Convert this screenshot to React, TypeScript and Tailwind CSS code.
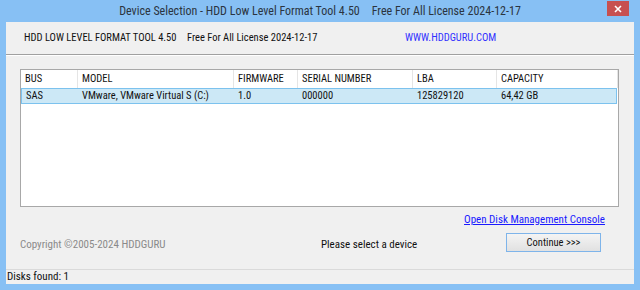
import React from 'react';

const columns = [
  { key: 'bus', label: 'BUS', width: 'w-[57px]' },
  { key: 'model', label: 'MODEL', width: 'w-[156px]' },
  { key: 'fw', label: 'FIRMWARE', width: 'w-[64px]' },
  { key: 'serial', label: 'SERIAL NUMBER', width: 'w-[115px]' },
  { key: 'lba', label: 'LBA', width: 'w-[84px]' },
  { key: 'cap', label: 'CAPACITY', width: 'w-[121px]' },
];

const disks = [
  { bus: 'SAS', model: 'VMware, VMware Virtual S (C:)', fw: '1.0', serial: '000000', lba: '125829120', cap: '64,42 GB' },
];

const App: React.FC = () => {
  return (
    <div className="w-[640px] h-[290px] bg-[#87c0f4] flex flex-col font-['Roboto_Condensed','Roboto',sans-serif] text-[#111] overflow-hidden whitespace-nowrap">
      {/* Barra del titolo */}
      <div className="h-[22px] shrink-0 grid grid-cols-[30px_1fr_30px] items-start">
        <div />
        <div className="text-center text-[12px] leading-[22px] text-[#2b3440]">
          Device Selection - HDD Low Level Format Tool 4.50
          <span className="ml-[12px]">Free For All License 2024-12-17</span>
        </div>
        <div className="flex justify-start">
          <div className="w-[22px] h-[15px] mt-[1px] -ml-[3px] bg-[#c75050] flex items-center justify-center">
            <svg width="8" height="8" viewBox="0 0 8 8">
              <path d="M1 1 L7 7 M7 1 L1 7" stroke="#fff" strokeWidth="1.6" />
            </svg>
          </div>
        </div>
      </div>

      {/* Area client */}
      <div className="flex-1 mx-[6px] mb-[6px] bg-[#f0f0f0] flex flex-col text-[10.5px]">
        <div className="h-[33px] shrink-0 flex items-center border-b border-[#a0a0a0]">
          <span className="ml-[18px] w-[163px]">HDD LOW LEVEL FORMAT TOOL 4.50</span>
          <span className="w-[218px]">Free For All License 2024-12-17</span>
          <span className="text-[#3030ff]">WWW.HDDGURU.COM</span>
        </div>
        <div className="h-px shrink-0 bg-white" />

        {/* Lista dischi */}
        <div className="mt-[13px] ml-[14px] mr-[15px] h-[138px] shrink-0 bg-white border border-[#a8a8a8] flex flex-col">
          <div className="h-[18px] flex">
            {columns.map((c) => (
              <div key={c.key} className={`${c.width} pl-[4px] leading-[18px] border-r border-[#e5e5e5]`}>
                {c.label}
              </div>
            ))}
          </div>
          {disks.map((d) => (
            <div key={d.serial} className="h-[16px] flex bg-[#cce8f6] border border-[#7cc2ee] mr-px">
              <div className="w-[56px] pl-[4px] leading-[14px]">{d.bus}</div>
              <div className="w-[156px] pl-[4px] leading-[14px]">{d.model}</div>
              <div className="w-[64px] pl-[4px] leading-[14px]">{d.fw}</div>
              <div className="w-[115px] pl-[4px] leading-[14px]">{d.serial}</div>
              <div className="w-[84px] pl-[4px] leading-[14px]">{d.lba}</div>
              <div className="flex-1 pl-[4px] leading-[14px]">{d.cap}</div>
            </div>
          ))}
        </div>

        <div className="h-[26px] shrink-0 flex items-center justify-end pr-[29px] text-[11px]">
          <span className="text-[#1a1aff] underline underline-offset-1">Open Disk Management Console</span>
        </div>

        <div className="h-[36px] shrink-0 flex items-start text-[11px]">
          <span className="ml-[14px] w-[301px] mt-[5px] leading-[14px] text-[#8a8a8a]">Copyright ©2005-2024 HDDGURU</span>
          <span className="w-[185px] mt-[5px] leading-[14px]">Please select a device</span>
          <div className="w-[95px] h-[19px] border border-[#7eb4ea] bg-gradient-to-b from-[#f4f4f4] to-[#e1e1e1] flex items-center justify-center text-[10.5px]">
            Continue &gt;&gt;&gt;
          </div>
        </div>

        <div className="flex-1" />
        <div className="h-[15px] shrink-0 border-t border-[#dadada] leading-[14px] pl-px text-[11px]">
          Disks found: 1
        </div>
      </div>
    </div>
  );
};

export default App;
